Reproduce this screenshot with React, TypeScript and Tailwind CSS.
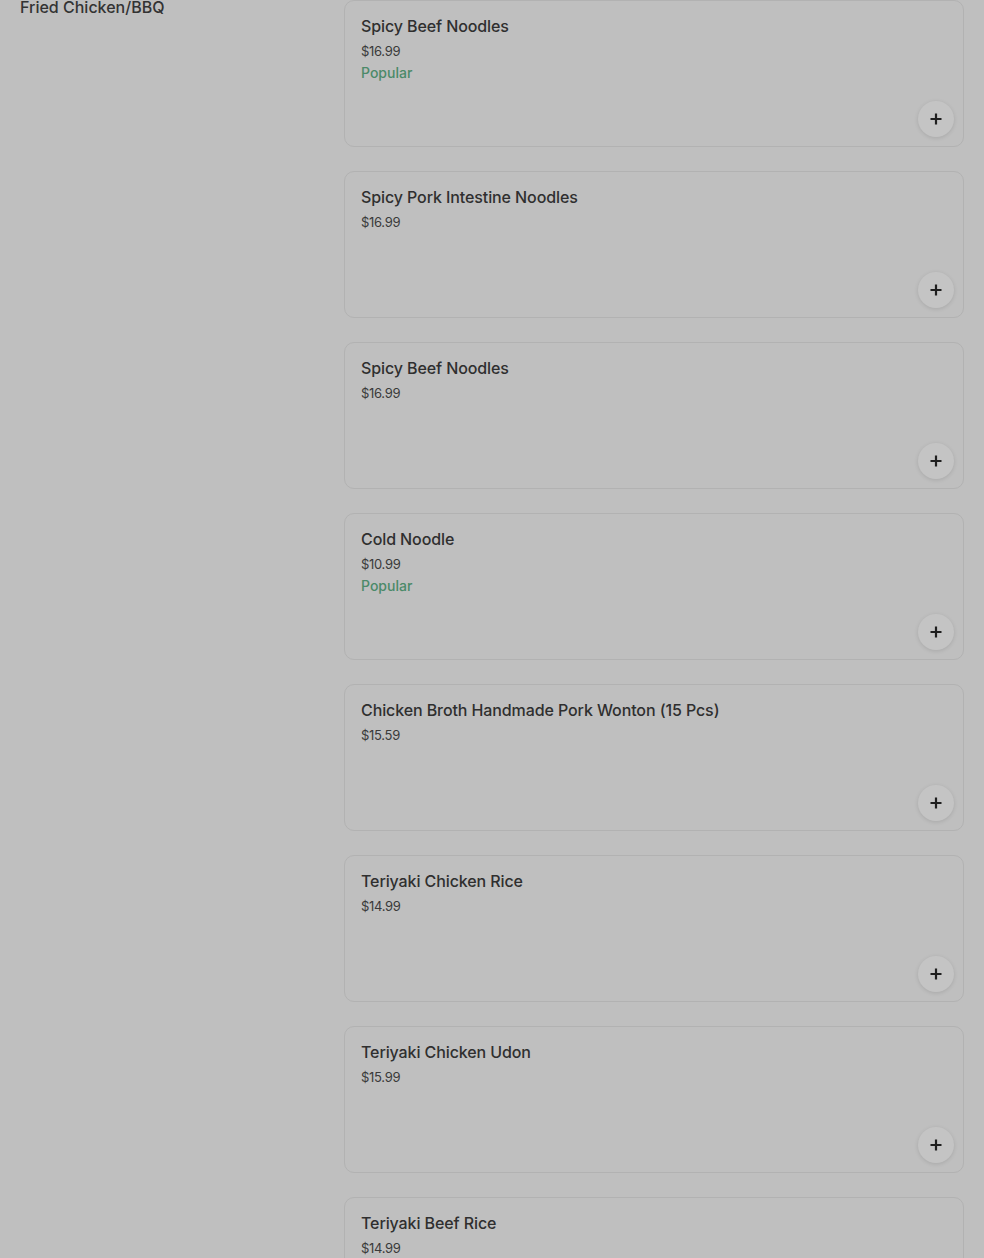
import React from 'react';

interface MenuItem {
  name: string;
  price: string;
  popular?: boolean;
}

const items: MenuItem[] = [
  { name: 'Spicy Beef Noodles', price: '$16.99', popular: true },
  { name: 'Spicy Pork Intestine Noodles', price: '$16.99' },
  { name: 'Spicy Beef Noodles', price: '$16.99' },
  { name: 'Cold Noodle', price: '$10.99', popular: true },
  { name: 'Chicken Broth Handmade Pork Wonton (15 Pcs)', price: '$15.59' },
  { name: 'Teriyaki Chicken Rice', price: '$14.99' },
  { name: 'Teriyaki Chicken Udon', price: '$15.99' },
  { name: 'Teriyaki Beef Rice', price: '$14.99' },
];

const PlusIcon = () => (
  <svg width="12" height="12" viewBox="0 0 12 12" fill="none">
    <path d="M6 0.5v11M0.5 6h11" stroke="#1f1f1f" strokeWidth="2.2" />
  </svg>
);

const ItemCard: React.FC<{ item: MenuItem }> = ({ item }) => (
  <div className="relative h-[147px] shrink-0 rounded-[10px] border border-[#b2b2b2] bg-[#bfbfbf] px-4 pt-[15px]">
    <h3 className="text-[16px] leading-5 font-medium tracking-[-0.1px] text-[#2f2f2f]">{item.name}</h3>
    <p className="mt-[5px] text-[13px] leading-5 text-[#3a3a3a] tracking-[-0.3px]">{item.price}</p>
    {item.popular && (
      <p className="mt-[2px] text-[14px] leading-5 font-medium text-[#4b8a69]">Popular</p>
    )}
    <button className="absolute right-[9px] bottom-[9px] flex h-9 w-9 items-center justify-center rounded-full bg-[#c4c4c4] shadow-[0_1px_4px_rgba(0,0,0,0.12)]">
      <PlusIcon />
    </button>
  </div>
);

export default function App() {
  return (
    <div
      className="flex h-[1258px] overflow-hidden bg-[#bfbfbf]"
      style={{ fontFamily: 'Inter, "Noto Sans", sans-serif' }}
    >
      <aside className="w-[344px] shrink-0 pl-5">
        <div className="-mt-[3px] text-[16px] leading-5 font-medium text-[#333333]">Fried Chicken/BBQ</div>
      </aside>
      <main className="flex w-[620px] shrink-0 flex-col gap-6">
        {items.map((item, i) => (
          <ItemCard key={i} item={item} />
        ))}
      </main>
    </div>
  );
}
